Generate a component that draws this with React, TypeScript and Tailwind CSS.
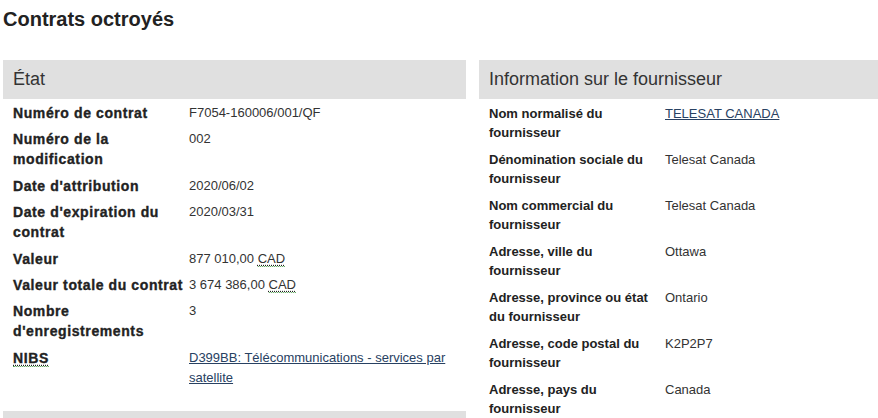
const ETAT = [
  { label: 'Numéro de contrat', value: 'F7054-160006/001/QF' },
  { label: 'Numéro de la modification', value: '002' },
  { label: "Date d'attribution", value: '2020/06/02' },
  { label: "Date d'expiration du contrat", value: '2020/03/31' },
  { label: 'Valeur', value: '877 010,00', cad: true },
  { label: 'Valeur totale du contrat', value: '3 674 386,00', cad: true },
  { label: "Nombre d'enregistrements", value: '3' },
]

const FOURNISSEUR = [
  { label: 'Nom normalisé du fournisseur', value: 'TELESAT CANADA', link: true },
  { label: 'Dénomination sociale du fournisseur', value: 'Telesat Canada' },
  { label: 'Nom commercial du fournisseur', value: 'Telesat Canada' },
  { label: 'Adresse, ville du fournisseur', value: 'Ottawa' },
  { label: 'Adresse, province ou état du fournisseur', value: 'Ontario' },
  { label: 'Adresse, code postal du fournisseur', value: 'K2P2P7' },
  { label: 'Adresse, pays du fournisseur', value: 'Canada' },
]

const heavy = 'text-[14px] font-bold tracking-[0.6px] [-webkit-text-stroke:0.35px_#222] text-[#222]'

function Abbr({ children, title }: { children: React.ReactNode; title: string }) {
  return (
    <abbr title={title} className="no-underline border-b border-dotted border-[#6b6] pb-0">
      <span className="underline decoration-dotted decoration-[#222] underline-offset-[2px]">{children}</span>
    </abbr>
  )
}

function PanelHeader({ title }: { title: string }) {
  return (
    <div className="h-[39px] bg-[#e0e0e0] flex items-center px-[10px] text-[18px] text-[#333]">
      {title}
    </div>
  )
}

export default function App() {
  return (
    <div className="h-screen w-full overflow-hidden bg-white font-['Liberation_Sans',Arial,sans-serif] text-[13px] text-[#333]">
      <div className="w-[942px] pl-[3px]">
        <h1 className="mt-[7px] text-[20px] leading-[24px] font-bold text-[#222]">Contrats octroyés</h1>

        <div className="mt-[29px] flex gap-[13px] items-start">
          {/* État */}
          <div className="w-[463px]">
            <section>
              <PanelHeader title="État" />
              <dl className="px-[10px] pt-[4px] pb-[23px] flex flex-col gap-[6.4px] leading-[20px]">
                {ETAT.map((row) => (
                  <div key={row.label} className="grid grid-cols-[176px_1fr]">
                    <dt className={heavy + ' pr-[2px]'}>{row.label}</dt>
                    <dd>
                      {row.value}
                      {row.cad && (
                        <>
                          {' '}
                          <Abbr title="Dollars canadiens">CAD</Abbr>
                        </>
                      )}
                    </dd>
                  </div>
                ))}
                <div className="grid grid-cols-[176px_1fr]">
                  <dt className={heavy}>
                    <Abbr title="Numéro d'identification des biens et services">NIBS</Abbr>
                  </dt>
                  <dd>
                    <a href="#" className="text-[#284162] underline">
                      D399BB: Télécommunications - services par satellite
                    </a>
                  </dd>
                </div>
              </dl>
            </section>
            {/* next panel, cut off by the window */}
            <div className="h-[39px] bg-[#e0e0e0]" />
          </div>

          {/* Fournisseur */}
          <section className="w-[463px]">
            <PanelHeader title="Information sur le fournisseur" />
            <dl className="px-[10px] pt-[5px] flex flex-col gap-[8px] leading-[19px]">
              {FOURNISSEUR.map((row) => (
                <div key={row.label} className="grid grid-cols-[176px_1fr]">
                  <dt className="font-bold text-[#222] pr-[4px]">{row.label}</dt>
                  <dd>
                    {row.link ? (
                      <a href="#" className="text-[#284162] underline">
                        {row.value}
                      </a>
                    ) : (
                      row.value
                    )}
                  </dd>
                </div>
              ))}
            </dl>
          </section>
        </div>
      </div>
    </div>
  )
}
